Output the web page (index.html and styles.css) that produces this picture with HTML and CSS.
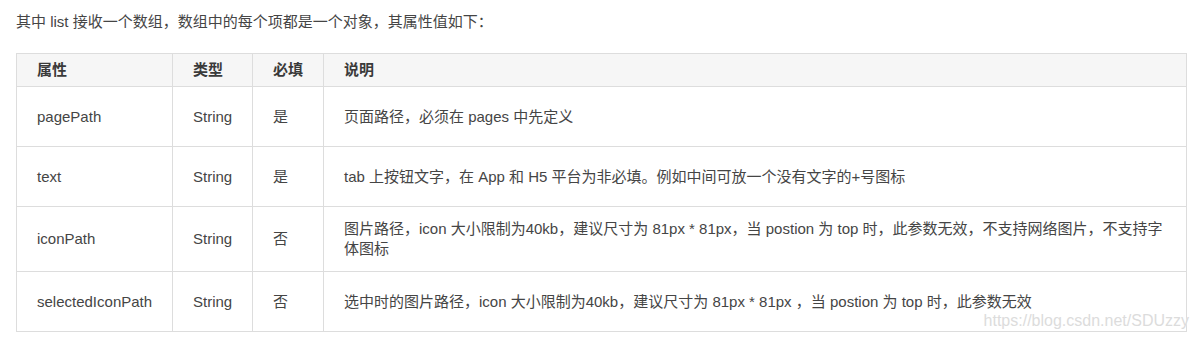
FILE: index.html
```html
<!DOCTYPE html>
<html lang="zh-CN">
<head>
<meta charset="utf-8">
<title>list 属性</title>
<link rel="stylesheet" href="styles.css">
</head>
<body>
<div class="page">
  <p class="intro">其中 list 接收一个数组，数组中的每个项都是一个对象，其属性值如下：</p>
  <div class="table-wrap">
    <table class="props">
      <colgroup>
        <col class="c1"><col class="c2"><col class="c3"><col class="c4">
      </colgroup>
      <thead>
        <tr><th>属性</th><th>类型</th><th>必填</th><th>说明</th></tr>
      </thead>
      <tbody>
        <tr><td>pagePath</td><td>String</td><td>是</td><td>页面路径，必须在 pages 中先定义</td></tr>
        <tr><td>text</td><td>String</td><td>是</td><td>tab 上按钮文字，在 App 和 H5 平台为非必填。例如中间可放一个没有文字的+号图标</td></tr>
        <tr><td>iconPath</td><td>String</td><td>否</td><td>图片路径，icon 大小限制为40kb，建议尺寸为 81px * 81px，当 postion 为 top 时，此参数无效，不支持网络图片，不支持字体图标</td></tr>
        <tr><td>selectedIconPath</td><td>String</td><td>否</td><td>选中时的图片路径，icon 大小限制为40kb，建议尺寸为 81px * 81px ，当 postion 为 top 时，此参数无效</td></tr>
      </tbody>
    </table>
    <span class="watermark">https://blog.csdn.net/SDUzzy</span>
  </div>
</div>
</body>
</html>
```

FILE: styles.css
```css
html, body {
  margin: 0;
  padding: 0;
  background: #ffffff;
}
body {
  font-family: "Liberation Sans", Arial, "Noto Sans CJK SC", sans-serif;
  font-size: 15px;
  color: #454545;
}
.page {
  padding: 12px 16px 0 16px;
}
.intro {
  margin: 0 0 21px 0;
  line-height: 20px;
}
.table-wrap {
  position: relative;
  width: 1170px;
}
.props {
  width: 1170px;
  table-layout: fixed;
  border-collapse: collapse;
  border: 1px solid #dddddd;
}
.c1 { width: 156px; }
.c2 { width: 80px; }
.c3 { width: 71px; }
.c4 { width: 863px; }
.props th,
.props td {
  border: 1px solid #dddddd;
  text-align: left;
  vertical-align: middle;
  line-height: 20px;
  padding: 12px 20px;
}
.props th {
  background: #f6f6f6;
  font-weight: bold;
  color: #3a3a3a;
  padding: 6px 20px;
}
.props tbody tr {
  height: 60px;
}
.watermark {
  position: absolute;
  right: -3px;
  bottom: 2px;
  font-size: 16px;
  line-height: 18px;
  color: #dcdcdc;
  text-shadow: 0 0 1px #ffffff;
  white-space: nowrap;
}
```
